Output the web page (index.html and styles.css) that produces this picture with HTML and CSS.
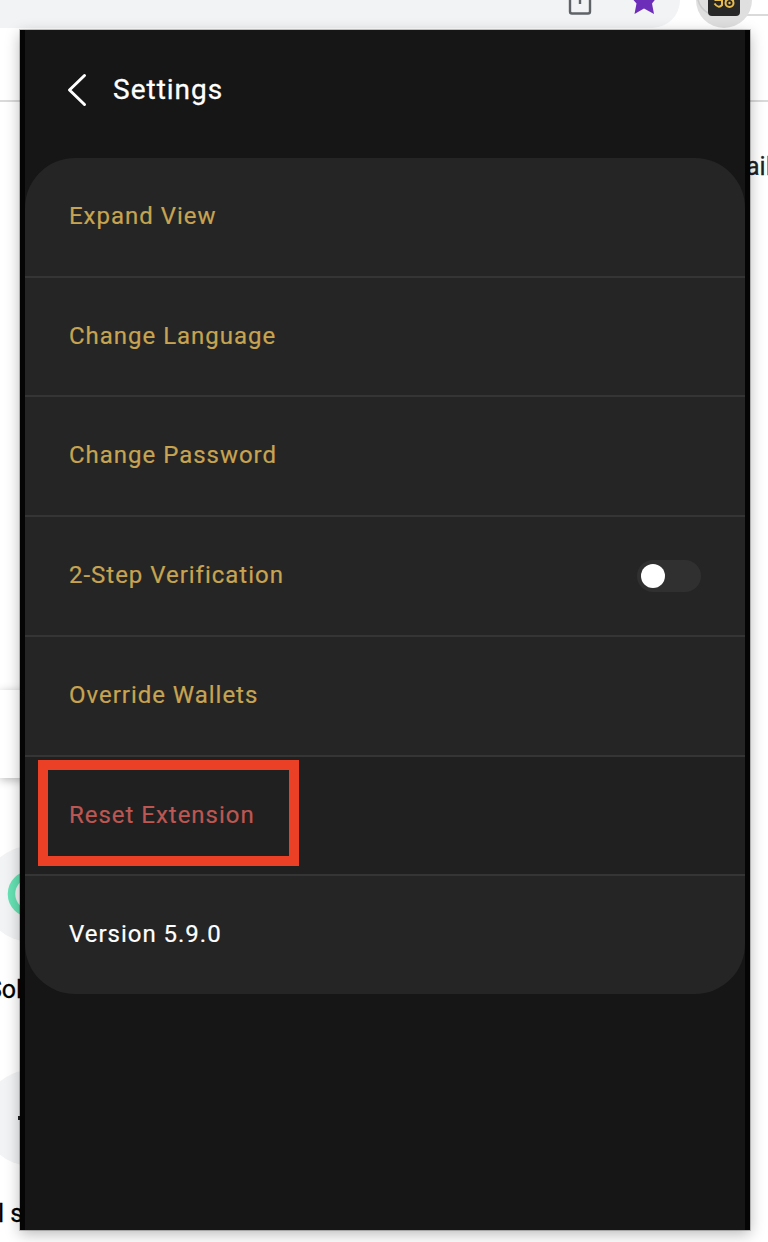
FILE: index.html
```html
<!DOCTYPE html>
<html lang="en">
<head>
<meta charset="utf-8">
<title>Settings</title>
<link rel="stylesheet" href="styles.css">
</head>
<body>
<div class="browser">
  <header class="toolbar">
    <div class="omnibox">
      <svg class="share" width="24" height="16" viewBox="0 0 24 16"><path d="M2 -8V11.500Q2 13.500 4 13.500H20Q22 13.500 22 11.500V-8M12 -8V4" fill="none" stroke="#5f6368" stroke-width="2.400"/></svg>
      <svg class="star" width="28" height="16" viewBox="0 0 28 16"><path d="M14 -14L17.500 -4H28L22 3.500L24 14L14 8.500L4.500 14L6.500 3.500L0 -4H10.500Z" fill="#6c2eb9"/></svg>
    </div>
    <svg class="extension" width="72" height="29" viewBox="0 0 72 29">
      <path d="M39 15H72" stroke="#dadada" stroke-width="2"/>
      <circle cx="28" cy="0" r="28" fill="#dfdfdf"/>
      <path d="M2 0Q4 8 12 13" fill="none" stroke="#cacaca" stroke-width="1.500"/>
      <rect x="12" y="-16" width="32" height="32" rx="4" fill="#282828"/>
      <g fill="none" stroke="#e8bd50" stroke-width="2"><path d="M18.500 3.500Q22.500 9 26 5V0H18.500"/><circle cx="33.500" cy="3" r="4"/><path d="M29 -1L31 1M38 -1L36 1"/></g>
      <circle cx="33.500" cy="3" r="1.200" fill="#e8bd50"/>
    </svg>
  </header>
  <main class="page">
    <div class="mail">ail</div>
    <div class="search"></div>
    <div class="tile"><svg width="48" height="48" viewBox="0 0 48 48"><circle cx="24" cy="24" r="19.500" fill="none" stroke="#66e3b4" stroke-width="7.500"/></svg></div>
    <div class="label label-sol">Sol</div>
    <div class="tile tile-second"><span class="dash"></span></div>
    <div class="label label-short">l s</div>
  </main>
</div>
<section class="popup">
  <header class="popup-head">
    <svg width="20" height="34" viewBox="0 0 20 34"><path d="M17.500 2.500L2.500 17L17.500 31.500" fill="none" stroke="#fff" stroke-width="3" stroke-linecap="round" stroke-linejoin="round"/></svg>
    <h1>Settings</h1>
  </header>
  <div class="menu">
    <div class="row">Expand View</div>
    <div class="row">Change Language</div>
    <div class="row">Change Password</div>
    <div class="row">2-Step Verification<span class="switch"></span></div>
    <div class="row">Override Wallets</div>
    <div class="row danger">Reset Extension<span class="highlight"></span></div>
    <div class="row version">Version 5.9.0</div>
  </div>
</section>
</body>
</html>
```
FILE: styles.css
```css
* { box-sizing: border-box; }
body { margin: 0; height: 1242px; overflow: hidden; background: #fff; font-family: Roboto, sans-serif; position: relative; }
svg { display: block; flex: none; }
.browser { height: 1242px; overflow: hidden; }
.toolbar { display: flex; height: 102px; border-bottom: 2px solid #dadada; }
.omnibox { display: flex; justify-content: flex-end; gap: 38px; width: 680px; height: 28px; padding-right: 22px; background: #f1f3f4; border-bottom-right-radius: 28px; }
.extension { margin-left: 16px; }
.mail { margin: 49px 0 0 746px; height: 31px; font-size: 25px; line-height: 31px; color: #202124; white-space: nowrap; -webkit-text-stroke: .3px; }
.search { width: 600px; height: 88px; margin-top: 508px; box-shadow: 0 2px 9px rgba(0,0,0,.28); }
.tile { display: flex; align-items: center; justify-content: center; width: 96px; height: 96px; margin: 68px 0 0 -17px; border-radius: 50%; background: #f1f3f4; }
.label { height: 30px; font-size: 25px; line-height: 30px; color: #000; white-space: nowrap; -webkit-text-stroke: .3px; }
.label-sol { margin: 33px 0 0 -13px; }
.tile-second { margin-top: 65px; justify-content: flex-start; padding-left: 35px; }
.dash { width: 20px; height: 4px; background: #202124; }
.label-short { margin: 33px 0 0 -2px; }
.popup { position: absolute; left: 20px; top: 30px; width: 730px; height: 1200px; border: solid #050505; border-width: 0 5px; background: #161616; box-shadow: 0 0 0 1px rgba(0,0,0,.2), 0 4px 14px rgba(0,0,0,.28); }
.popup-head { display: flex; align-items: center; gap: 26px; height: 128px; padding: 0 0 8px 42px; }
h1 { margin: 0; font-size: 28px; line-height: 34px; font-weight: 400; letter-spacing: 1px; color: #fff; -webkit-text-stroke: .3px; }
.menu { display: grid; grid-template-rows: 120px 119px 120px 120px 120px 119px 118px; border-radius: 50px; overflow: hidden; background: #252525; }
.row { position: relative; display: flex; align-items: flex-start; justify-content: space-between; padding: 44px 44px 0; border-bottom: 2px solid #353535; color: #c7a451; font-size: 24px; line-height: 28px; letter-spacing: .98px; -webkit-text-stroke: .2px; }
.switch { width: 64px; height: 32px; margin-top: -1px; padding: 4px; border-radius: 16px; background: #303030; }
.switch::before { content: ""; display: block; width: 24px; height: 24px; border-radius: 50%; background: #fff; }
.danger { color: #bd5753; background: #202020; }
.highlight { position: absolute; left: 13px; top: 3px; width: 261px; height: 106px; border: 10px solid #eb4025; }
.version { border: 0; color: #fff; }
```
